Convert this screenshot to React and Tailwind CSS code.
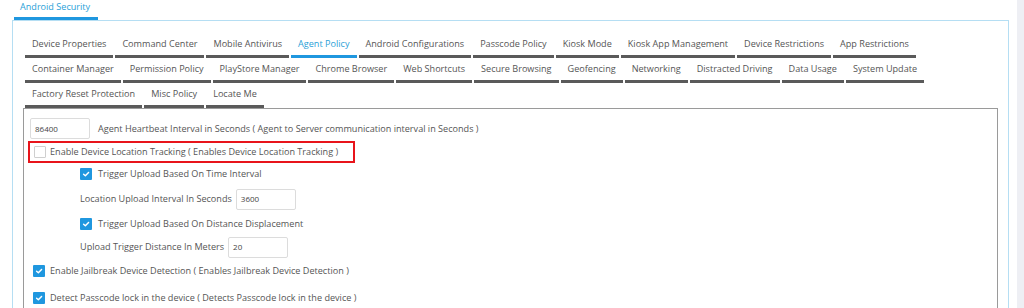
import React from 'react'

const rows = [
  ['Device Properties', 'Command Center', 'Mobile Antivirus', 'Agent Policy', 'Android Configurations', 'Passcode Policy', 'Kiosk Mode', 'Kiosk App Management', 'Device Restrictions', 'App Restrictions'],
  ['Container Manager', 'Permission Policy', 'PlayStore Manager', 'Chrome Browser', 'Web Shortcuts', 'Secure Browsing', 'Geofencing', 'Networking', 'Distracted Driving', 'Data Usage', 'System Update'],
  ['Factory Reset Protection', 'Misc Policy', 'Locate Me'],
]

function Check({ checked }) {
  if (!checked) {
    return <span className="w-[12px] h-[12px] shrink-0 border border-[#cfcfcf] bg-white rounded-[1px]" />
  }
  return (
    <span className="w-[12px] h-[12px] shrink-0 bg-[#1f97df] rounded-[1px] flex items-center justify-center">
      <svg width="8" height="8" viewBox="0 0 10 10">
        <path d="M2 5.2 L4.2 7.3 L8.2 3" stroke="white" strokeWidth="1.8" fill="none" strokeLinecap="round" strokeLinejoin="round" />
      </svg>
    </span>
  )
}

function Field({ value }) {
  return (
    <div className="w-[60px] h-[21px] border border-[#dcdcdc] rounded-[2px] bg-white flex items-center px-[4px] text-[8px] text-[#444]">
      {value}
    </div>
  )
}

export default function App() {
  return (
    <div
      className="flex h-[308px] overflow-hidden bg-white text-[#555]"
      style={{ fontFamily: '"Open Sans", sans-serif' }}
    >
      <div className="flex-1 pl-[12px] pr-[8px]">
        {/* top tab */}
        <div className="flex">
          <div className="ml-[2px] w-[84px] h-[20px] border-b-[3px] border-[#1f97df] text-[#2a9fd8] text-[9.1px] pl-[6px] pt-[1px] leading-[12px]">
            Android Security
          </div>
        </div>

        {/* outer panel */}
        <div className="border border-[#b5def3] border-b-0 h-[300px] pt-[12px] pl-[10px] pr-[10px]">
          <div className="pl-[2px]">
            {rows.map((row, r) => (
              <div key={r} className="flex gap-x-[2px]">
                {row.map(t => {
                  const active = t === 'Agent Policy'
                  return (
                    <div
                      key={t}
                      className={`h-[25px] px-[7px] pt-[5px] text-[9.1px] leading-[12px] whitespace-nowrap border-b-[3px] ${
                        active ? 'border-[#1f97df] text-[#2a9fd8]' : 'border-[#5a5a5a] text-[#555]'
                      }`}
                    >
                      {t}
                    </div>
                  )
                })}
              </div>
            ))}
          </div>

          {/* content */}
          <div className="border border-[#9a9a9a] border-b-0 h-[200px] pt-[9px] pl-[6px] text-[9.1px] leading-[12px]">
            <div className="flex items-center gap-[8px]">
              <Field value="86400" />
              <span>Agent Heartbeat Interval in Seconds ( Agent to Server communication interval in Seconds )</span>
            </div>

            <div className="mt-[2px] -ml-[2px] w-[327px] h-[22px] border-2 border-[#e8141b] flex items-center gap-[4px] pl-[4px]">
              <Check checked={false} />
              <span>Enable Device Location Tracking ( Enables Device Location Tracking )</span>
            </div>

            <div className="pl-[50px]">
              <div className="mt-[4px] flex items-center gap-[6px] h-[14px]">
                <Check checked />
                <span>Trigger Upload Based On Time Interval</span>
              </div>
              <div className="mt-[7px] flex items-center gap-[4px] h-[22px]">
                <span>Location Upload Interval In Seconds</span>
                <Field value="3600" />
              </div>
              <div className="mt-[7px] flex items-center gap-[6px] h-[14px]">
                <Check checked />
                <span>Trigger Upload Based On Distance Displacement</span>
              </div>
              <div className="mt-[5px] flex items-center gap-[4px] h-[22px]">
                <span>Upload Trigger Distance In Meters</span>
                <Field value="20" />
              </div>
            </div>

            <div className="mt-[6px] flex items-center gap-[5px] h-[14px] pl-[3px]">
              <Check checked />
              <span>Enable Jailbreak Device Detection ( Enables Jailbreak Device Detection )</span>
            </div>
            <div className="mt-[13px] flex items-center gap-[5px] h-[14px] pl-[3px]">
              <Check checked />
              <span>Detect Passcode lock in the device ( Detects Passcode lock in the device )</span>
            </div>
          </div>
        </div>
      </div>
      <div className="w-[7px] bg-[#eeeff4]" />
    </div>
  )
}
